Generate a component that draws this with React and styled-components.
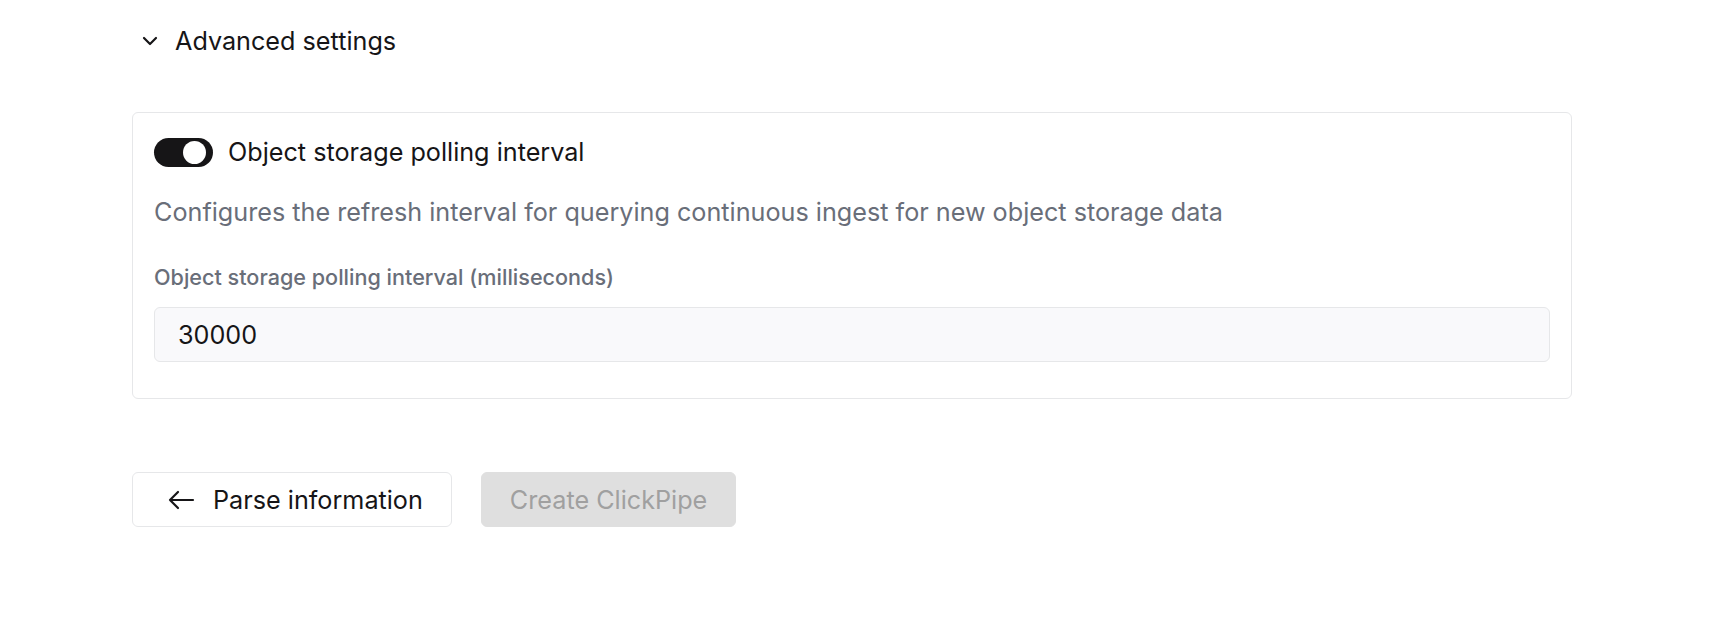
import React, { useState } from 'react';
import styled, { createGlobalStyle } from 'styled-components';

const GlobalStyle = createGlobalStyle`
  body {
    margin: 0;
    background: #ffffff;
    font-family: Inter, "Noto Sans", sans-serif;
    color: #161517;
  }
`;

const Page = styled.div`
  padding: 23px 0 0 132px;
`;

const SectionHeader = styled.button`
  display: flex;
  align-items: center;
  gap: 17px;
  padding: 0 0 0 10px;
  border: none;
  background: none;
  font-family: inherit;
  font-size: 25.2px;
  line-height: 36px;
  color: #161517;
  cursor: pointer;
`;

const Card = styled.div`
  width: 1440px;
  box-sizing: border-box;
  margin-top: 53px;
  padding: 21px 21px 36px 21px;
  border: 1px solid #e6e7e9;
  border-radius: 6px;
  display: flex;
  flex-direction: column;
`;

const ToggleRow = styled.label`
  display: flex;
  align-items: center;
  gap: 15px;
  font-size: 25.2px;
  line-height: 36px;
  color: #161517;
`;

const Track = styled.span`
  position: relative;
  width: 59px;
  height: 29px;
  border-radius: 15px;
  background: ${(p) => (p.$on ? '#161517' : '#dfdfdf')};
  cursor: pointer;
`;

const Knob = styled.span`
  position: absolute;
  top: 3px;
  left: ${(p) => (p.$on ? '29px' : '4px')};
  width: 23px;
  height: 23px;
  border-radius: 50%;
  background: #ffffff;
`;

const Description = styled.p`
  margin: 24px 0 0;
  font-size: 25.2px;
  line-height: 36px;
  color: #696e79;
`;

const FieldLabel = styled.div`
  margin-top: 32px;
  font-size: 21.6px;
  line-height: 30px;
  font-weight: 500;
  color: #696e79;
`;

const Input = styled.input`
  margin-top: 15px;
  height: 55px;
  box-sizing: border-box;
  width: 100%;
  padding: 0 23px;
  border: 1px solid #e6e7e9;
  border-radius: 6px;
  background: #f9f9fb;
  font-family: inherit;
  font-size: 25.2px;
  color: #161517;
  outline: none;
`;

const Actions = styled.div`
  display: flex;
  gap: 29px;
  margin-top: 73px;
`;

const Button = styled.button`
  display: flex;
  align-items: center;
  gap: 18px;
  height: 55px;
  box-sizing: border-box;
  padding: 0 28px 0 ${(p) => (p.$icon ? '35px' : '28px')};
  border-radius: 6px;
  border: 1px solid ${(p) => (p.$disabled ? '#dfdfdf' : '#e6e7e9')};
  background: ${(p) => (p.$disabled ? '#dfdfdf' : '#ffffff')};
  color: ${(p) => (p.$disabled ? '#a0a0a0' : '#161517')};
  font-family: inherit;
  font-size: 25.2px;
  cursor: ${(p) => (p.$disabled ? 'not-allowed' : 'pointer')};
`;

function Chevron() {
  return (
    <svg width="16" height="10" viewBox="0 0 16 10" fill="none">
      <path d="M2 2l6 6 6-6" stroke="#161517" strokeWidth="2.2" strokeLinecap="round" strokeLinejoin="round" />
    </svg>
  );
}

function ArrowLeft() {
  return (
    <svg width="27" height="20" viewBox="0 0 27 20" fill="none">
      <path d="M25 10H2M10 2L2 10l8 8" stroke="#161517" strokeWidth="2.2" strokeLinecap="round" strokeLinejoin="round" />
    </svg>
  );
}

export default function App() {
  const [enabled, setEnabled] = useState(true);
  const [interval, setInterval] = useState('30000');

  return (
    <Page>
      <GlobalStyle />
      <SectionHeader>
        <Chevron />
        Advanced settings
      </SectionHeader>
      <Card>
        <ToggleRow>
          <Track $on={enabled} onClick={() => setEnabled(!enabled)}>
            <Knob $on={enabled} />
          </Track>
          Object storage polling interval
        </ToggleRow>
        <Description>
          Configures the refresh interval for querying continuous ingest for new object storage data
        </Description>
        <FieldLabel>Object storage polling interval (milliseconds)</FieldLabel>
        <Input value={interval} onChange={(e) => setInterval(e.target.value)} />
      </Card>
      <Actions>
        <Button $icon>
          <ArrowLeft />
          Parse information
        </Button>
        <Button $disabled>Create ClickPipe</Button>
      </Actions>
    </Page>
  );
}
